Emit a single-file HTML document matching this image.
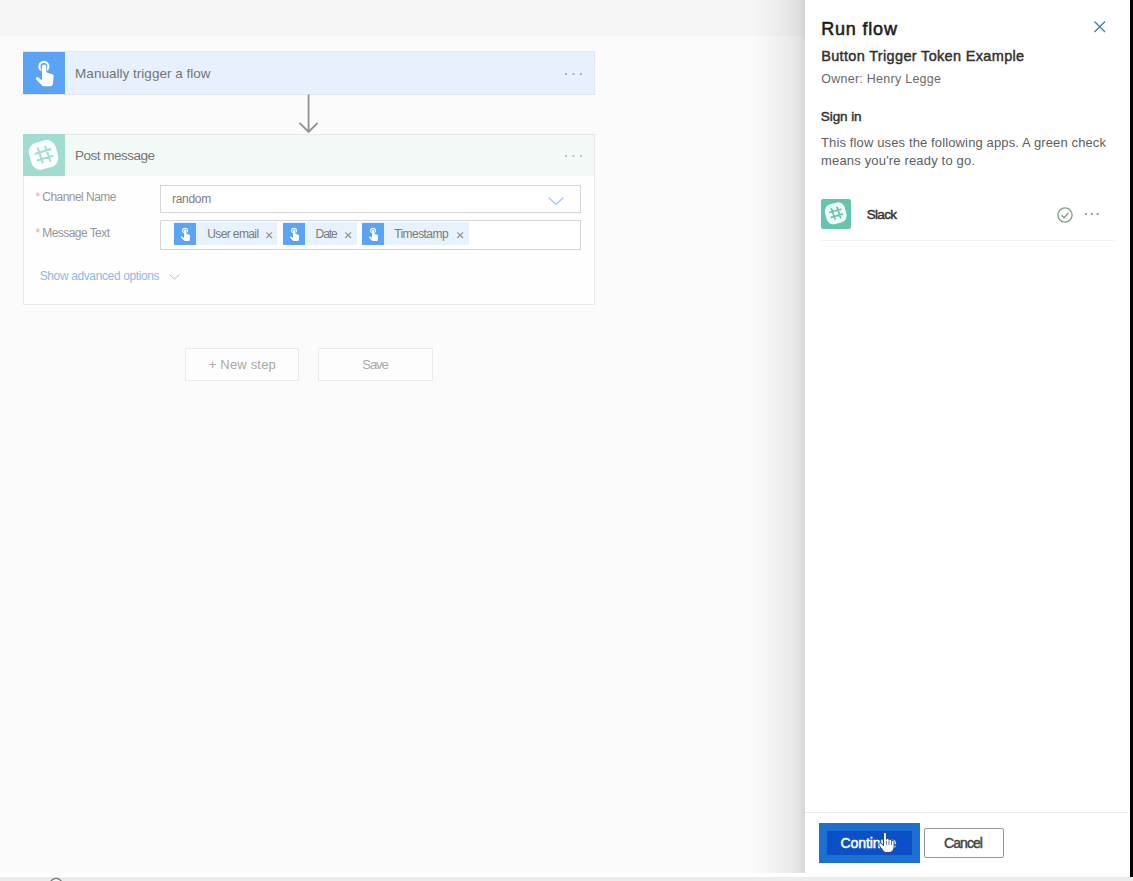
<!DOCTYPE html>
<html lang="en"><head><meta charset="utf-8"><title>Run flow</title>
<style>
html,body{margin:0;padding:0}
body{width:1133px;height:881px;overflow:hidden;position:relative;background:#fbfbfb;font-family:"Liberation Sans",sans-serif}
.a{position:absolute;box-sizing:border-box}
.t{position:absolute;white-space:nowrap;line-height:1;font-family:"Liberation Sans",sans-serif}
svg{position:absolute;overflow:visible}

</style></head><body>
<!-- dimmed designer canvas -->
<div class="a" style="left:0;top:0;width:805px;height:36px;background:#f6f6f6"></div>
<!-- trigger card -->
<div class="a" style="left:23px;top:51px;width:572px;height:44px;background:#e6f1fd;border:1px solid #e0e7ef"></div>
<div class="a" style="left:23px;top:52px;width:42px;height:42px;background:#5ba3f4"></div>
<svg style="left:23px;top:52px" width="42" height="42" viewBox="0 0 42 42"><circle cx="20.900" cy="14.400" r="4.500" fill="none" stroke="#fff" stroke-width="2.200"/><path d="M19 14.600a2.150 2.150 0 0 1 4.300 0V20.300L29.300 22.300c.9 .3 1.400 1 1.300 2L30 31.500c-.2 1.700-1.300 2.800-3 2.800H21c-.9 0-1.600-.3-2.200-1L13.200 27.600c-.5-.6-.4-1.400 .2-1.900 .7-.5 1.500-.4 2.200 .1L19 28.200z" fill="#fff" stroke="#5ba3f4" stroke-width="1.300" paint-order="stroke"/></svg>
<svg style="left:564px;top:72px" width="20" height="4" viewBox="0 0 20 4"><g fill="#9aa6b3"><circle cx="2" cy="2" r="1.100"/><circle cx="9.500" cy="2" r="1.100"/><circle cx="17" cy="2" r="1.100"/></g></svg>
<!-- arrow -->
<svg style="left:298px;top:94px" width="22" height="40" viewBox="0 0 22 40"><path d="M10.600 .5V38M1.600 29l9 9 9-9" fill="none" stroke="#929292" stroke-width="1.800"/></svg>
<!-- slack card -->
<div class="a" style="left:23px;top:134px;width:572px;height:171px;background:#fefefe;border:1px solid #e9e9e9"></div>
<div class="a" style="left:24px;top:134px;width:570px;height:42px;background:#f3f9f7;border-top:1px solid #e3e6e5"></div>
<div class="a" style="left:23px;top:134px;width:42px;height:42px;background:#a0dccf"></div>
<svg style="left:23px;top:134px" width="42" height="42" viewBox="0 0 42 42"><g transform="translate(20.600 20.9) scale(1.0) translate(-20.600 -20.900)"><rect x="6.800" y="7.100" width="27.600" height="27.600" rx="9.500" fill="#fdfffe" transform="rotate(-15 20.600 20.900)"/><g stroke="#a0dccf" stroke-width="2" stroke-linecap="round" fill="none"><path d="M14.800 14.300l4.800 14.200M22.400 12.600l4.800 14.200M12.400 19.700l15-4.400M14.600 26.300l15-4.400"/></g></g></svg>
<svg style="left:564px;top:154px" width="20" height="4" viewBox="0 0 20 4"><g fill="#aebdb9"><circle cx="2" cy="2" r="1.100"/><circle cx="9.500" cy="2" r="1.100"/><circle cx="17" cy="2" r="1.100"/></g></svg>
<!-- fields -->
<span class="t" style="left:35.500px;top:191px;font-size:12px;color:#eda6a6">*</span>
<span class="t" style="left:35.500px;top:226.500px;font-size:12px;color:#eda6a6">*</span>
<div class="a" style="left:160px;top:185px;width:421px;height:28px;background:#fff;border:1px solid #d5d5d5"></div>
<svg style="left:548px;top:196.500px" width="16" height="9" viewBox="0 0 16 9"><path d="M.7 .8l7.300 6.600 7.300-6.600" fill="none" stroke="#a3c3ea" stroke-width="1.200"/></svg>
<div class="a" style="left:160px;top:220px;width:421px;height:30px;background:#fff;border:1px solid #d5d5d5"></div>
<!-- tokens -->
<div class="a" style="left:174.3px;top:222px;width:102.9px;height:23px;background:#e8f2fd"></div>
<div class="a" style="left:174.3px;top:222.500px;width:22.2px;height:22px;background:#5ba3f4"></div>
<svg style="left:174.3px;top:222.5px" width="22.2" height="22.2" viewBox="0 0 42 42"><circle cx="20.900" cy="14.400" r="4.500" fill="none" stroke="#fff" stroke-width="2.200"/><path d="M19 14.600a2.150 2.150 0 0 1 4.300 0V20.300L29.300 22.300c.9 .3 1.400 1 1.300 2L30 31.500c-.2 1.700-1.300 2.800-3 2.800H21c-.9 0-1.600-.3-2.200-1L13.200 27.600c-.5-.6-.4-1.400 .2-1.900 .7-.5 1.500-.4 2.200 .1L19 28.200z" fill="#fff" stroke="#5ba3f4" stroke-width="1.300" paint-order="stroke"/></svg>
<div class="a" style="left:283.1px;top:222px;width:73.6px;height:23px;background:#e8f2fd"></div>
<div class="a" style="left:283.1px;top:222.500px;width:22.2px;height:22px;background:#5ba3f4"></div>
<svg style="left:283.1px;top:222.5px" width="22.2" height="22.2" viewBox="0 0 42 42"><circle cx="20.900" cy="14.400" r="4.500" fill="none" stroke="#fff" stroke-width="2.200"/><path d="M19 14.600a2.150 2.150 0 0 1 4.300 0V20.300L29.300 22.300c.9 .3 1.400 1 1.300 2L30 31.500c-.2 1.700-1.300 2.800-3 2.800H21c-.9 0-1.600-.3-2.200-1L13.200 27.600c-.5-.6-.4-1.400 .2-1.900 .7-.5 1.500-.4 2.200 .1L19 28.200z" fill="#fff" stroke="#5ba3f4" stroke-width="1.300" paint-order="stroke"/></svg>
<div class="a" style="left:361.5px;top:222px;width:107.5px;height:23px;background:#e8f2fd"></div>
<div class="a" style="left:361.5px;top:222.500px;width:22.2px;height:22px;background:#5ba3f4"></div>
<svg style="left:361.5px;top:222.5px" width="22.2" height="22.2" viewBox="0 0 42 42"><circle cx="20.900" cy="14.400" r="4.500" fill="none" stroke="#fff" stroke-width="2.200"/><path d="M19 14.600a2.150 2.150 0 0 1 4.300 0V20.300L29.300 22.300c.9 .3 1.400 1 1.300 2L30 31.500c-.2 1.700-1.300 2.800-3 2.800H21c-.9 0-1.600-.3-2.200-1L13.200 27.600c-.5-.6-.4-1.400 .2-1.900 .7-.5 1.500-.4 2.200 .1L19 28.200z" fill="#fff" stroke="#5ba3f4" stroke-width="1.300" paint-order="stroke"/></svg>
<svg style="left:266.1px;top:231.8px" width="6.400" height="6.400" viewBox="0 0 6.400 6.400"><path d="M.4 .4l5.600 5.600M6 .4l-5.600 5.600" stroke="#8f8f8f" stroke-width="1.100" fill="none"/></svg>
<svg style="left:345.3px;top:231.8px" width="6.400" height="6.400" viewBox="0 0 6.400 6.400"><path d="M.4 .4l5.600 5.600M6 .4l-5.600 5.600" stroke="#8f8f8f" stroke-width="1.100" fill="none"/></svg>
<svg style="left:456.5px;top:231.8px" width="6.400" height="6.400" viewBox="0 0 6.400 6.400"><path d="M.4 .4l5.600 5.600M6 .4l-5.600 5.600" stroke="#8f8f8f" stroke-width="1.100" fill="none"/></svg>
<svg style="left:169px;top:273.500px" width="11" height="6" viewBox="0 0 11 6"><path d="M.5 .5l5 4.600 5-4.600" fill="none" stroke="#bbb" stroke-width="1"/></svg>
<!-- buttons -->
<div class="a" style="left:185px;top:348px;width:114px;height:33px;background:#fdfdfd;border:1px solid #eaeaea"></div>
<div class="a" style="left:318px;top:348px;width:115px;height:33px;background:#fdfdfd;border:1px solid #eaeaea"></div>
<!-- panel shadow -->
<div class="a" style="left:745px;top:0;width:60px;height:877px;background:linear-gradient(to right,rgba(0,0,0,0) 0%,rgba(0,0,0,.012) 25%,rgba(0,0,0,.035) 50%,rgba(0,0,0,.065) 75%,rgba(0,0,0,.105) 92%,rgba(0,0,0,.15) 100%)"></div>
<!-- panel -->
<div class="a" style="left:805px;top:0;width:325px;height:877px;background:#fff"></div>
<div class="a" style="left:1130px;top:0;width:3px;height:877px;background:#000"></div>
<div class="a" style="left:0;top:873px;width:805px;height:4px;background:#fefefe"></div>
<div class="a" style="left:0;top:876.500px;width:1133px;height:4.500px;background:#ececec"></div>
<svg style="left:49px;top:877px" width="14" height="4" viewBox="0 0 14 4"><circle cx="7.100" cy="7.600" r="6.200" fill="#f4f4f4" stroke="#777" stroke-width="1.200"/></svg>
<svg style="left:1093.600px;top:20.800px" width="11.500" height="11.500" viewBox="0 0 12 12"><path d="M.5 .5l11 11M11.500 .5l-11 11" fill="none" stroke="#3c7cc0" stroke-width="1.350"/></svg>
<!-- slack row -->
<div class="a" style="left:821px;top:199px;width:30px;height:30px;background:#66c4ae;border-radius:2px"></div>
<svg style="left:821px;top:199px" width="30" height="30" viewBox="0 0 42 42"><g transform="translate(20.600 20.099999999999998) scale(1.04) translate(-20.600 -20.900)"><rect x="6.800" y="7.100" width="27.600" height="27.600" rx="9.500" fill="#f4fcfa" transform="rotate(-15 20.600 20.900)"/><g stroke="#66c4ae" stroke-width="2.3" stroke-linecap="round" fill="none"><path d="M14.800 14.300l4.800 14.200M22.400 12.600l4.800 14.200M12.400 19.700l15-4.400M14.600 26.300l15-4.400"/></g></g></svg>
<svg style="left:1057px;top:206.600px" width="16" height="16" viewBox="0 0 16 16"><circle cx="8" cy="8" r="7.100" fill="none" stroke="#7a9f87" stroke-width="1.300"/><path d="M4.600 8.300l2.400 2.400 4.500-4.700" fill="none" stroke="#7a9f87" stroke-width="1.300"/></svg>
<svg style="left:1084px;top:211.500px" width="16" height="4" viewBox="0 0 16 4"><g fill="#858388"><circle cx="1.900" cy="2" r="1.100"/><circle cx="7.800" cy="2" r="1.100"/><circle cx="13.600" cy="2" r="1.100"/></g></svg>
<div class="a" style="left:820px;top:240px;width:295px;height:1px;background:#f4f4f4"></div>
<!-- footer -->
<div class="a" style="left:805px;top:812px;width:324px;height:1px;background:#ebebeb"></div>
<div class="a" style="left:819px;top:823px;width:101px;height:40px;background:#1b70d2"></div>
<div class="a" style="left:827px;top:831px;width:85px;height:24px;background:#0b50c6"></div>
<div class="a" style="left:924px;top:828px;width:80px;height:30px;background:#fff;border:1px solid #9a9896;border-radius:2px"></div>

<span class="t" id="t1" style="left:75.1px;top:66.9px;font-size:13.5px;font-weight:400;color:#757575;letter-spacing:0.020px">Manually trigger a flow</span>
<span class="t" id="t2" style="left:75.1px;top:148.8px;font-size:13.5px;font-weight:400;color:#757575;letter-spacing:-0.513px">Post message</span>
<span class="t" id="t3" style="left:42.3px;top:191.0px;font-size:12px;font-weight:400;color:#969696;letter-spacing:-0.541px">Channel Name</span>
<span class="t" id="t4" style="left:42.3px;top:226.5px;font-size:12px;font-weight:400;color:#969696;letter-spacing:-0.557px">Message Text</span>
<span class="t" id="t5" style="left:172.0px;top:192.8px;font-size:12px;font-weight:400;color:#7d7d7d;letter-spacing:-0.298px">random</span>
<span class="t" id="t6" style="left:207.2px;top:228.3px;font-size:12px;font-weight:400;color:#7b7b7b;letter-spacing:-0.607px">User email</span>
<span class="t" id="t7" style="left:315.6px;top:228.3px;font-size:12px;font-weight:400;color:#7b7b7b;letter-spacing:-1.053px">Date</span>
<span class="t" id="t8" style="left:394.2px;top:228.3px;font-size:12px;font-weight:400;color:#7b7b7b;letter-spacing:-0.563px">Timestamp</span>
<span class="t" id="t9" style="left:39.7px;top:269.8px;font-size:12px;font-weight:400;color:#92b7e4;letter-spacing:-0.377px">Show advanced options</span>
<span class="t" id="t10" style="left:208.8px;top:358.0px;font-size:13px;font-weight:400;color:#a8a8a8;letter-spacing:0.177px">+ New step</span>
<span class="t" id="t11" style="left:362.3px;top:358.0px;font-size:13px;font-weight:400;color:#a8a8a8;letter-spacing:-1.080px">Save</span>
<span class="t" id="t12" style="left:821.2px;top:19.6px;font-size:18px;font-weight:400;color:#1b1b1b;-webkit-text-stroke:0.55px #1b1b1b;letter-spacing:0.810px">Run flow</span>
<span class="t" id="t13" style="left:821.2px;top:49.1px;font-size:14.5px;font-weight:400;color:#323130;-webkit-text-stroke:0.45px #323130;letter-spacing:0.334px">Button Trigger Token Example</span>
<span class="t" id="t14" style="left:821.2px;top:72.9px;font-size:12.5px;font-weight:400;color:#6a6a6a;letter-spacing:0.262px">Owner: Henry Legge</span>
<span class="t" id="t15" style="left:820.8px;top:109.6px;font-size:13.5px;font-weight:400;color:#323130;-webkit-text-stroke:0.45px #323130;letter-spacing:-0.080px">Sign in</span>
<span class="t" id="t16" style="left:821.0px;top:135.9px;font-size:13px;font-weight:400;color:#605e5c;letter-spacing:0.129px">This flow uses the following apps. A green check</span>
<span class="t" id="t17" style="left:821.0px;top:153.8px;font-size:13px;font-weight:400;color:#605e5c;letter-spacing:0.171px">means you're ready to go.</span>
<span class="t" id="t18" style="left:866.7px;top:207.8px;font-size:13.5px;font-weight:400;color:#323130;-webkit-text-stroke:0.45px #323130;letter-spacing:-0.679px">Slack</span>
<span class="t" id="t19" style="left:840.4px;top:836.1px;font-size:14px;font-weight:400;color:#ffffff;-webkit-text-stroke:0.5px #ffffff;letter-spacing:-0.064px">Continue</span>
<span class="t" id="t20" style="left:944.0px;top:836.3px;font-size:14px;font-weight:400;color:#444;-webkit-text-stroke:0.45px #444;letter-spacing:-0.919px">Cancel</span>
<svg style="left:877.500px;top:832px" width="17.200" height="21.200" viewBox="0 0 17.400 21.600" preserveAspectRatio="none"><path d="M5.500 1.800C5.500 1 6.200 .5 7 .5s1.500 .5 1.500 1.300V7.500c0-.7 .6-1.100 1.300-1.100s1.300 .4 1.300 1.100v1c0-.7 .6-1.100 1.300-1.100s1.300 .4 1.300 1.100v1.200c0-.7 .6-1.100 1.300-1.100s1.300 .4 1.300 1.100V15c0 3.500-2 6-5.500 6H9c-2 0-3.300-1-4.300-2.500L1 13.500c-.5-.8-.3-1.700 .4-2.100 .7-.4 1.600-.2 2.200 .5L5.500 14z" fill="#fff" stroke="#1a2f6b" stroke-width=".9"/><path d="M8.500 9v4M11.100 9.500v3.500M13.700 10.200v2.800" stroke="#1a2f6b" stroke-width=".7" fill="none"/></svg>

</body></html>
